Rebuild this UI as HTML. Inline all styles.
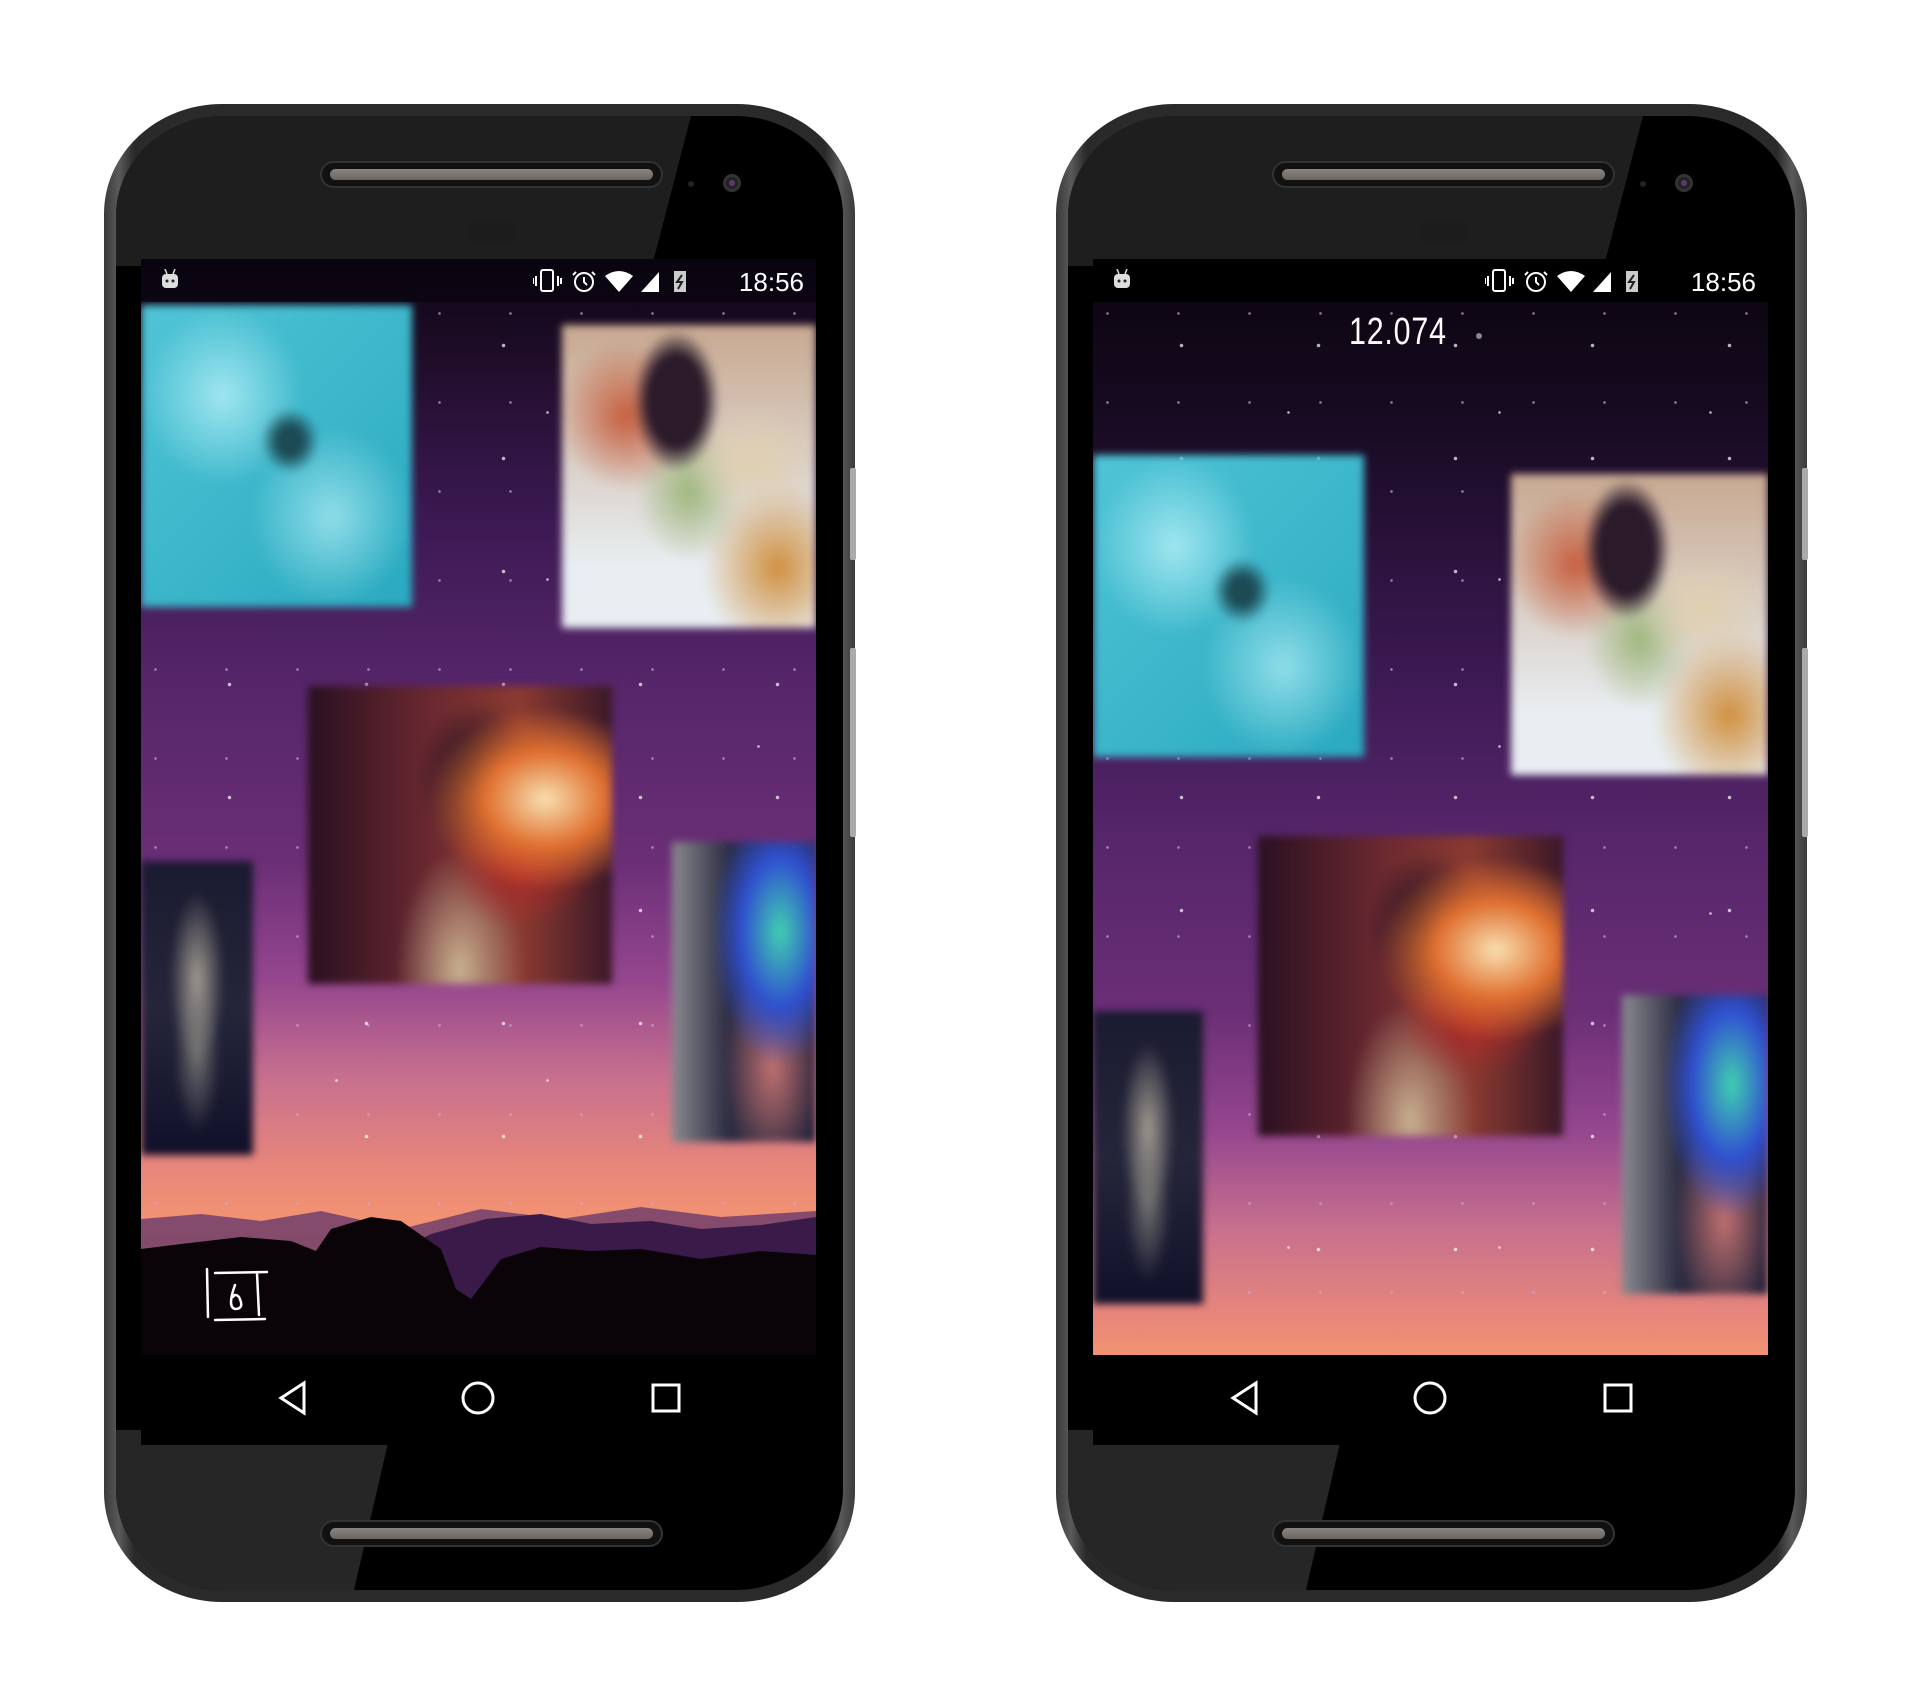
<!DOCTYPE html>
<html><head><meta charset="utf-8"><style>
*{margin:0;padding:0;box-sizing:border-box}
body{width:1905px;height:1700px;background:#fff;position:relative;overflow:hidden;font-family:"Liberation Sans",sans-serif}
.phone{position:absolute;top:104px;width:751px;height:1498px}
.body{position:absolute;left:0;top:0;width:751px;height:1498px;border-radius:118px/110px;background:linear-gradient(90deg,#3a3a3a,#5a5a5a 2%,#2a2a2a 4%,#2a2a2a 96%,#5a5a5a 98%,#3a3a3a);}
.face{position:absolute;left:12px;top:12px;width:727px;height:1474px;border-radius:108px/100px;background:#000;overflow:hidden}
.refl1{position:absolute;left:0;top:0;width:600px;height:160px;background:#1e1e1e;clip-path:polygon(0 0,575px 0,536px 150px,0 150px)}
.refl2{position:absolute;left:0;bottom:0;width:280px;height:160px;background:#262626;clip-path:polygon(0 0,275px 0,238px 160px,0 160px)}
.btn{position:absolute;left:746px;width:6px;background:#aaa;border-radius:2px}
.spk{position:absolute;left:204px;width:343px;height:27px;border-radius:14px;background:#111;border:2px solid #333}
.spk::after{content:"";position:absolute;left:8px;right:8px;top:6px;height:11px;border-radius:6px;background:linear-gradient(#8a8580,#6a6560)}
.cam{position:absolute;left:607px;top:58px;width:18px;height:18px;border-radius:50%;background:#222;border:3px solid #333}
.cam::after{content:"";position:absolute;left:3px;top:3px;width:6px;height:6px;border-radius:50%;background:#5a3a6a}
.dot{position:absolute;left:572px;top:65px;width:6px;height:6px;border-radius:50%;background:#222}
.ear{position:absolute;left:353px;top:105px;width:46px;height:22px;border-radius:11px;background:#1c1c1c}
.screen{position:absolute;left:25px;top:143px;width:675px;height:1186px;overflow:hidden}
.status{position:absolute;left:0;top:0;width:675px;height:43px;color:#fff}
.time{position:absolute;right:12px;top:8px;font-size:26px}
.photo{position:absolute;filter:blur(4px)}
.nav{position:absolute;left:0;top:1096px;width:675px;height:90px;background:#000}
.stars{position:absolute;inset:0;background-image:radial-gradient(circle,#fff 1.5px,transparent 2px),radial-gradient(circle,#c9a8e8 1px,transparent 1.6px),radial-gradient(circle,#fff 1px,transparent 1.6px);background-size:137px 113px,71px 89px,211px 167px;background-position:20px 30px,50px 10px,90px 70px;opacity:.7}
</style></head><body>

<!-- PHONE 1 -->
<div class="phone" style="left:104px">
 <div class="body"></div>
 <div class="btn" style="top:364px;height:92px"></div>
 <div class="btn" style="top:544px;height:189px"></div>
 <div class="face">
  <div class="refl1"></div><div class="refl2"></div>
  <div class="spk" style="top:45px"></div>
  <div class="dot"></div><div class="cam"></div>
  <div class="ear"></div>
  <div class="spk" style="top:1404px"></div>
  <div class="screen">
   <div style="position:absolute;inset:0;background:linear-gradient(#0d0512 0px,#1f0d2a 100px,#3a1850 250px,#55256a 420px,#6a2e76 600px,#94468e 720px,#c8708e 820px,#e8877a 910px,#f29272 960px,#e08a70 1000px)"></div>
   <div class="stars"></div>
   <svg style="position:absolute;left:0;top:930px" width="675" height="170" viewBox="0 0 675 170">
    <path d="M0 30 L60 25 L120 32 L180 22 L260 40 L340 20 L420 30 L500 18 L580 28 L675 22 L675 170 L0 170Z" fill="#6a3a6a" opacity=".8"/>
    <path d="M260 60 L290 45 L345 30 L400 25 L450 35 L510 32 L560 40 L620 36 L675 28 L675 170 L260 170Z" fill="#3a1a48"/>
    <path d="M0 60 L40 55 L100 48 L150 52 L175 62 L190 40 L230 28 L260 32 L300 60 L315 100 L330 110 L360 70 L400 58 L450 62 L500 60 L560 70 L620 62 L675 66 L675 170 L0 170Z" fill="#0a0408"/>
   </svg>
   <div class="photo" style="left:0;top:46px;width:271px;height:302px;background:radial-gradient(ellipse at 55% 45%,#1c4a55 0 6%,transparent 14%),radial-gradient(ellipse at 30% 30%,#9fe6ef,transparent 30%),radial-gradient(ellipse at 70% 70%,#8fdde8,transparent 30%),linear-gradient(135deg,#4fc4d6,#2aa9c0)"></div>
   <div class="photo" style="left:421px;top:66px;width:254px;height:303px;background:radial-gradient(ellipse at 45% 25%,#2a1a2a 0 14%,transparent 22%),radial-gradient(ellipse at 25% 30%,#c86040,transparent 25%),radial-gradient(ellipse at 75% 45%,#e0d0b0,transparent 25%),radial-gradient(ellipse at 50% 55%,#a0b880,transparent 30%),radial-gradient(ellipse at 85% 80%,#d09040,transparent 25%),linear-gradient(#c8a890,#e8eef2 80%)"></div>
   <div class="photo" style="left:167px;top:427px;width:304px;height:298px;background:radial-gradient(ellipse at 78% 38%,#f8e0b0,#e07030 18%,transparent 35%),radial-gradient(ellipse at 55% 30%,#1a1020,transparent 25%),radial-gradient(ellipse at 70% 60%,#b02828,transparent 25%),radial-gradient(ellipse at 50% 95%,#c8b090,transparent 30%),linear-gradient(90deg,#2a1020,#6a2830 40%,#8a3a30 70%,#3a1828)"></div>
   <div class="photo" style="left:0;top:602px;width:112px;height:294px;background:radial-gradient(ellipse at 50% 40%,#a09a90,transparent 35%),radial-gradient(ellipse at 50% 65%,#707070,transparent 30%),linear-gradient(#1a1a30,#25253a 50%,#10102a)"></div>
   <div class="photo" style="left:531px;top:583px;width:144px;height:300px;background:radial-gradient(ellipse at 75% 30%,#40d0b0,#3050d0 25%,transparent 45%),radial-gradient(ellipse at 70% 75%,#c07070,transparent 35%),linear-gradient(90deg,#8a8a90,#2a2a40 40%,#202038)"></div>
   <div class="status" style="background:rgba(10,4,16,.75)">
    <svg style="position:absolute;left:20px;top:10px" width="18" height="20"><path d="M4 0 L6 5 M14 0 L12 5" stroke="#ddd" stroke-width="1.5"/><rect x="1" y="5" width="16" height="14" rx="4" fill="#ddd"/><circle cx="6" cy="12" r="1.5" fill="#222"/><circle cx="12" cy="12" r="1.5" fill="#222"/></svg>
    <svg style="position:absolute;left:392px;top:9px" width="190" height="26" fill="none" stroke="#fff" stroke-width="2">
     <rect x="8" y="2" width="12" height="21" rx="2"/><path d="M3 8v10M25 8v10M0 10v6M28 10v6"/>
     <circle cx="51" cy="14" r="9"/><path d="M51 9v5l3 3M43 4l-3 3M59 4l3 3"/>
     <path d="M72 8 Q86 -2 100 8 L86 24Z" fill="#fff" stroke="none"/>
     <path d="M108 24 L126 4 L126 24Z" fill="#fff" stroke="none"/>
     <rect x="141" y="3" width="12" height="21" fill="#ccc" stroke="none"/><path d="M149 7 L144 14 L149 14 L145 21" stroke="#222"/>
    </svg>
    <div class="time">18:56</div>
   </div>
   <svg style="position:absolute;left:64px;top:1008px" width="70" height="58" fill="none" stroke="#fff" stroke-width="2.5" stroke-linecap="round">
    <path d="M2 2 L3 50 M10 6 L62 5 M52 6 L54 48 M10 53 L60 52"/><path d="M30 18 Q22 40 30 42 Q40 42 34 30 Q30 26 28 30"/>
   </svg>
   <div class="nav">
    <svg width="675" height="90" fill="none" stroke="#fff" stroke-width="3">
     <path d="M163 28 L140 43 L163 58Z"/><circle cx="337" cy="43" r="15"/><rect x="512" y="30" width="26" height="26"/>
    </svg>
   </div>
  </div>
 </div>
</div>

<!-- PHONE 2 -->
<div class="phone" style="left:1056px">
 <div class="body"></div>
 <div class="btn" style="top:364px;height:92px"></div>
 <div class="btn" style="top:544px;height:189px"></div>
 <div class="face">
  <div class="refl1"></div><div class="refl2"></div>
  <div class="spk" style="top:45px"></div>
  <div class="dot"></div><div class="cam"></div>
  <div class="ear"></div>
  <div class="spk" style="top:1404px"></div>
  <div class="screen">
   <div style="position:absolute;inset:0;background:linear-gradient(#0a040e 0px,#160a20 150px,#3a1850 400px,#55256a 570px,#6a2e76 750px,#94468e 870px,#c8708e 970px,#e8877a 1060px,#f29272 1096px)"></div>
   <div class="stars"></div>
   <div class="photo" style="left:0;top:196px;width:271px;height:302px;background:radial-gradient(ellipse at 55% 45%,#1c4a55 0 6%,transparent 14%),radial-gradient(ellipse at 30% 30%,#9fe6ef,transparent 30%),radial-gradient(ellipse at 70% 70%,#8fdde8,transparent 30%),linear-gradient(135deg,#4fc4d6,#2aa9c0)"></div>
   <div class="photo" style="left:418px;top:215px;width:257px;height:301px;background:radial-gradient(ellipse at 45% 25%,#2a1a2a 0 14%,transparent 22%),radial-gradient(ellipse at 25% 30%,#c86040,transparent 25%),radial-gradient(ellipse at 75% 45%,#e0d0b0,transparent 25%),radial-gradient(ellipse at 50% 55%,#a0b880,transparent 30%),radial-gradient(ellipse at 85% 80%,#d09040,transparent 25%),linear-gradient(#c8a890,#e8eef2 80%)"></div>
   <div class="photo" style="left:165px;top:577px;width:305px;height:300px;background:radial-gradient(ellipse at 78% 38%,#f8e0b0,#e07030 18%,transparent 35%),radial-gradient(ellipse at 55% 30%,#1a1020,transparent 25%),radial-gradient(ellipse at 70% 60%,#b02828,transparent 25%),radial-gradient(ellipse at 50% 95%,#c8b090,transparent 30%),linear-gradient(90deg,#2a1020,#6a2830 40%,#8a3a30 70%,#3a1828)"></div>
   <div class="photo" style="left:0;top:752px;width:110px;height:293px;background:radial-gradient(ellipse at 50% 40%,#a09a90,transparent 35%),radial-gradient(ellipse at 50% 65%,#707070,transparent 30%),linear-gradient(#1a1a30,#25253a 50%,#10102a)"></div>
   <div class="photo" style="left:529px;top:736px;width:146px;height:299px;background:radial-gradient(ellipse at 75% 30%,#40d0b0,#3050d0 25%,transparent 45%),radial-gradient(ellipse at 70% 75%,#c07070,transparent 35%),linear-gradient(90deg,#8a8a90,#2a2a40 40%,#202038)"></div>
   <div class="status" style="background:#000">
    <svg style="position:absolute;left:20px;top:10px" width="18" height="20"><path d="M4 0 L6 5 M14 0 L12 5" stroke="#ddd" stroke-width="1.5"/><rect x="1" y="5" width="16" height="14" rx="4" fill="#ddd"/><circle cx="6" cy="12" r="1.5" fill="#222"/><circle cx="12" cy="12" r="1.5" fill="#222"/></svg>
    <svg style="position:absolute;left:392px;top:9px" width="190" height="26" fill="none" stroke="#fff" stroke-width="2">
     <rect x="8" y="2" width="12" height="21" rx="2"/><path d="M3 8v10M25 8v10M0 10v6M28 10v6"/>
     <circle cx="51" cy="14" r="9"/><path d="M51 9v5l3 3M43 4l-3 3M59 4l3 3"/>
     <path d="M72 8 Q86 -2 100 8 L86 24Z" fill="#fff" stroke="none"/>
     <path d="M108 24 L126 4 L126 24Z" fill="#fff" stroke="none"/>
     <rect x="141" y="3" width="12" height="21" fill="#ccc" stroke="none"/><path d="M149 7 L144 14 L149 14 L145 21" stroke="#222"/>
    </svg>
    <div class="time">18:56</div>
   </div>
   <div style="position:absolute;left:256px;top:52px;color:#fff;font-size:38px;font-weight:300;letter-spacing:1px;transform:scaleX(.8);transform-origin:left">12.074</div>
   <div style="position:absolute;left:383px;top:74px;width:6px;height:6px;border-radius:50%;background:#888"></div>
   <div class="nav">
    <svg width="675" height="90" fill="none" stroke="#fff" stroke-width="3">
     <path d="M163 28 L140 43 L163 58Z"/><circle cx="337" cy="43" r="15"/><rect x="512" y="30" width="26" height="26"/>
    </svg>
   </div>
  </div>
 </div>
</div>
</body></html>
